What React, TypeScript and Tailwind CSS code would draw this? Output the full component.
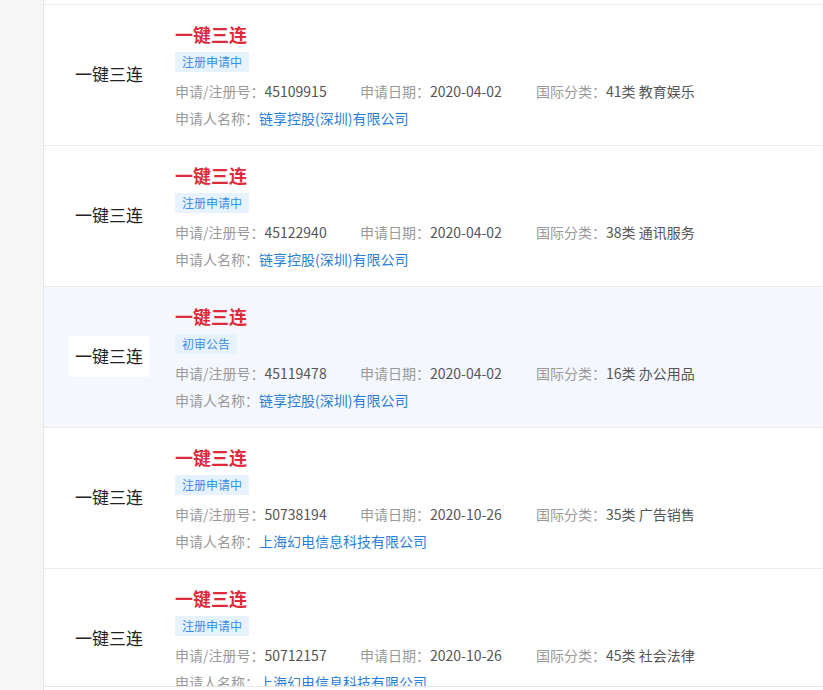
import React from "react";

type Item = {
  status: string;
  regNo: string;
  date: string;
  cls: string;
  applicant: string;
  active?: boolean;
};

const items: Item[] = [
  { status: "注册申请中", regNo: "45109915", date: "2020-04-02", cls: "41类 教育娱乐", applicant: "链享控股(深圳)有限公司" },
  { status: "注册申请中", regNo: "45122940", date: "2020-04-02", cls: "38类 通讯服务", applicant: "链享控股(深圳)有限公司" },
  { status: "初审公告", regNo: "45119478", date: "2020-04-02", cls: "16类 办公用品", applicant: "链享控股(深圳)有限公司", active: true },
  { status: "注册申请中", regNo: "50738194", date: "2020-10-26", cls: "35类 广告销售", applicant: "上海幻电信息科技有限公司" },
  { status: "注册申请中", regNo: "50712157", date: "2020-10-26", cls: "45类 社会法律", applicant: "上海幻电信息科技有限公司" },
];

function Row({ it }: { it: Item }) {
  return (
    <div
      className={`flex h-[141px] shrink-0 border-b border-[#ebebeb] ${it.active ? "bg-[#f4f7fd]" : "bg-white"}`}
    >
      <div className="flex w-[131px] shrink-0 items-center pl-[25px] pb-[2px]">
        <div className="flex h-[41px] w-[80px] items-center justify-center bg-white pb-[2px] text-[17px] leading-none text-[#222]">
          一键三连
        </div>
      </div>
      <div className="flex flex-col pt-[17px]">
        <div className="text-[18px] font-bold leading-[24px] text-[#dc2b3b]">一键三连</div>
        <div className="mt-[6px] flex">
          <span className="flex h-[20px] items-center bg-[#e6f2fd] px-[7px] text-[12px] leading-none text-[#3a8ce6]">
            {it.status}
          </span>
        </div>
        <div className="mt-[9px] flex text-[14px] leading-[20px]">
          <span className="w-[185px] shrink-0">
            <span className="text-[#999]">申请/注册号：</span>
            <span className="text-[#555]">{it.regNo}</span>
          </span>
          <span className="w-[176px] shrink-0">
            <span className="text-[#999]">申请日期：</span>
            <span className="text-[#555]">{it.date}</span>
          </span>
          <span>
            <span className="text-[#999]">国际分类：</span>
            <span className="text-[#555]">{it.cls}</span>
          </span>
        </div>
        <div className="mt-[7px] text-[14px] leading-[20px]">
          <span className="text-[#999]">申请人名称：</span>
          <span className="text-[#2b7fd5]">{it.applicant}</span>
        </div>
      </div>
    </div>
  );
}

export default function App() {
  return (
    <div
      className="relative flex h-[690px] w-full overflow-hidden bg-white"
      style={{ fontFamily: '"Noto Sans CJK SC", "Noto Sans", sans-serif' }}
    >
      <div className="w-[44px] shrink-0 border-r border-[#e6e6e6] bg-[#f6f6f6]" />
      <div className="flex min-w-0 flex-1 flex-col pt-[4px]">
        <div className="flex flex-col border-t border-[#ebebeb]">
          {items.map((it, i) => (
            <Row key={i} it={it} />
          ))}
        </div>
      </div>
      <div className="absolute bottom-0 left-[44px] right-0 h-[4px] border-t border-[#e6e6e6] bg-white" />
    </div>
  );
}
